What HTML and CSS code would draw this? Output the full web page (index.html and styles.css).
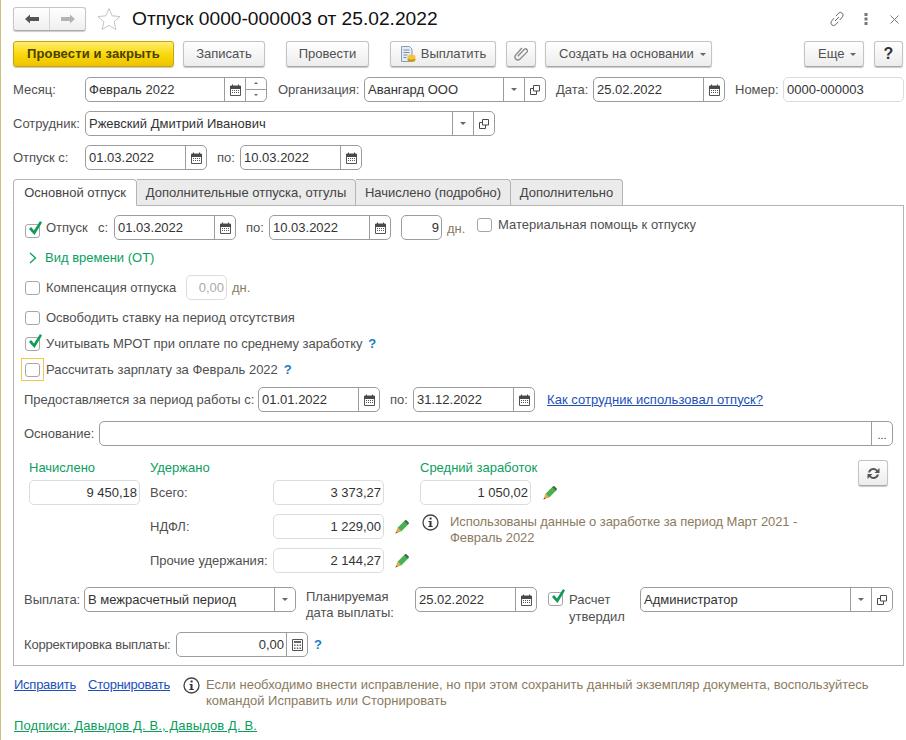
FILE: index.html
```html
<!DOCTYPE html>
<html lang="ru">
<head>
<meta charset="utf-8">
<title>Отпуск 0000-000003</title>
<link rel="stylesheet" href="styles.css">
</head>
<body>
<svg class="defs" width="0" height="0" aria-hidden="true">
  <symbol id="cal" viewBox="0 0 11 12">
    <path d="M0.5 2h10v9.5h-10z" fill="#fff" stroke="#555"/>
    <path d="M0 2h11v3H0z" fill="#4a4a4a"/>
    <path d="M2.5 0.5v2M8.5 0.5v2" stroke="#4a4a4a"/>
    <path d="M2 6h1v1H2zM4 6h1v1H4zM6 6h1v1H6zM8 6h1v1H8zM2 8h1v1H2zM4 8h1v1H4zM6 8h1v1H6zM8 8h1v1H8z" fill="#555"/>
  </symbol>
  <symbol id="open" viewBox="0 0 10 10">
    <path d="M3.5 0.5h6v5.500h-6z" fill="none" stroke="#4a4a4a"/>
    <path d="M3.500 3.500h-3v6h6v-3.500" fill="none" stroke="#4a4a4a"/>
  </symbol>
  <symbol id="pencil" viewBox="0 0 14 14">
    <path d="M2.500 7.800L9.500 .8l3.700 3.700-7 7z" fill="#4bb04f"/>
    <path d="M9.200 1.100L10.200 .3a1 1 0 0 1 1.300 0l2.200 2.200a1 1 0 0 1 0 1.300l-.8 1z" fill="#3d6a48"/>
    <path d="M2.500 7.800l3.700 3.700L.5 13.500z" fill="#e8a64a"/>
    <path d="M1.200 11.500L.5 13.500l2-.7z" fill="#555"/>
  </symbol>
  <symbol id="info" viewBox="0 0 17 17">
    <circle cx="8.500" cy="8.500" r="7.500" fill="#fff" stroke="#444" stroke-width="1.300"/>
    <path d="M7.600 3.600h2v2h-2zM6.500 7h3v5h1.200v1H6.300v-1h1.200V8h-1z" fill="#333"/>
  </symbol>
  <symbol id="check" viewBox="0 0 15 17">
    <path d="M2 9l2-2 3 3.500L13 1l2 1.500L7.500 15z" fill="#0c9c55"/>
  </symbol>
</svg>

<div class="page">
  <header class="title-row">
    <div class="nav">
      <span class="nav-btn"><svg width="14" height="10" viewBox="0 0 14 10"><path d="M0 5l5-4.500V3h9v4H5v2.500z" fill="#555"/></svg></span>
      <span class="nav-btn"><svg width="14" height="10" viewBox="0 0 14 10"><path d="M14 5L9 .5V3H0v4h9v2.500z" fill="#b4b4b4"/></svg></span>
    </div>
    <svg class="star" width="24" height="24" viewBox="0 0 24 24"><path d="M12 1.500l3.200 7.300 7.800.8-5.900 5.200 1.800 7.700-6.900-4-6.900 4 1.800-7.700L1 9.600l7.800-.8z" fill="#fff" stroke="#c4c4c4"/></svg>
    <h1 class="title">Отпуск 0000-000003 от 25.02.2022</h1>
    <div class="win-icons">
      <svg width="16" height="16" viewBox="0 0 16 16"><g fill="none" stroke="#6a6a6a" stroke-width="1"><path d="M6.800 5.200l2.700-3a2.700 2.700 0 0 1 4 3.600L10.800 9"/><path d="M9.200 10.800l-2.700 3a2.700 2.700 0 0 1-4-3.600L5.200 7"/><path d="M6 10l4-4"/></g></svg>
      <svg width="4" height="12" viewBox="0 0 4 12"><path d="M.500 0h3v3h-3zM.500 4.500h3v3h-3zM.500 9h3v3h-3z" fill="#777"/></svg>
      <svg width="9" height="9" viewBox="0 0 9 9"><path d="M.500 .500l8 8M8.500 .500l-8 8" stroke="#777" stroke-width="1"/></svg>
    </div>
  </header>

  <div class="toolbar">
    <button class="btn btn-main w-161">Провести и закрыть</button>
    <button class="btn w-82 ml-9">Записать</button>
    <button class="btn w-83 ml-21">Провести</button>
    <button class="btn w-106 ml-21"><svg class="pay-ic" width="16" height="17" viewBox="0 0 16 17"><path d="M1.500 .500h8l2.500 2.500v12.500h-10.500z" fill="#e6ecf5" stroke="#8a9bb5"/><path d="M3.500 4h6M3.500 6.500h6M3.500 9h4M3.500 11.500h3" stroke="#7d8ea8"/><ellipse cx="11.500" cy="13.500" rx="4" ry="2.500" fill="#c99a1c"/><ellipse cx="11.500" cy="11" rx="4" ry="2.500" fill="#f2c53a"/></svg>Выплатить</button>
    <button class="btn w-30 ml-10"><svg width="14" height="16" viewBox="0 0 14 16"><path d="M4 10.500l6-7.500a2 2 0 0 1 3 2.500L6 13.500a3 3 0 0 1-4.500-3.800L7.500 2" fill="none" stroke="#8c8c8c" stroke-width="1.400" transform="rotate(4 7 8)"/></svg></button>
    <button class="btn btn-drop w-167 ml-9">Создать на основании<i class="caret ml-6"></i></button>
    <button class="btn btn-drop w-60 ml-auto">Еще<i class="caret ml-6"></i></button>
    <button class="btn w-29 ml-10 help-btn">?</button>
  </div>

  <div class="head-form">
    <div class="row">
      <label class="lbl w-72">Месяц:</label>
      <div class="field w-182"><span class="val">Февраль 2022</span>
        <span class="fb"><svg width="11" height="12"><use href="#cal"/></svg></span>
        <span class="fb spin"><i class="up"></i><i class="down"></i></span>
      </div>
      <label class="lbl tight w-86 ml-11">Организация:</label>
      <div class="field w-182"><span class="val">Авангард ООО</span>
        <span class="fb"><i class="caret"></i></span>
        <span class="fb"><svg width="10" height="10"><use href="#open"/></svg></span>
      </div>
      <label class="lbl w-37 ml-10">Дата:</label>
      <div class="field w-132"><span class="val">25.02.2022</span>
        <span class="fb"><svg width="11" height="12"><use href="#cal"/></svg></span>
      </div>
      <label class="lbl w-48 ml-10">Номер:</label>
      <div class="field ro w-121"><span class="val">0000-000003</span></div>
    </div>
    <div class="row">
      <label class="lbl w-72">Сотрудник:</label>
      <div class="field w-410"><span class="val">Ржевский Дмитрий Иванович</span>
        <span class="fb"><i class="caret"></i></span>
        <span class="fb"><svg width="10" height="10"><use href="#open"/></svg></span>
      </div>
    </div>
    <div class="row">
      <label class="lbl w-72">Отпуск с:</label>
      <div class="field w-122"><span class="val">01.03.2022</span>
        <span class="fb"><svg width="11" height="12"><use href="#cal"/></svg></span>
      </div>
      <label class="lbl w-23 ml-10">по:</label>
      <div class="field w-122"><span class="val">10.03.2022</span>
        <span class="fb"><svg width="11" height="12"><use href="#cal"/></svg></span>
      </div>
    </div>
  </div>

  <nav class="tabs">
    <span class="tab active w-124">Основной отпуск</span>
    <span class="tab w-219">Дополнительные отпуска, отгулы</span>
    <span class="tab w-155">Начислено (подробно)</span>
    <span class="tab w-112">Дополнительно</span>
  </nav>

  <section class="panel">
    <div class="row row-top">
      <span class="cb cb-low"><svg class="tick" width="15" height="17"><use href="#check"/></svg></span>
      <label class="lbl ml-6 w-52">Отпуск</label>
      <label class="lbl w-16">с:</label>
      <div class="field w-122"><span class="val">01.03.2022</span>
        <span class="fb"><svg width="11" height="12"><use href="#cal"/></svg></span>
      </div>
      <label class="lbl w-23 ml-10">по:</label>
      <div class="field w-122"><span class="val">10.03.2022</span>
        <span class="fb"><svg width="11" height="12"><use href="#cal"/></svg></span>
      </div>
      <div class="field ml-10 w-41 ro-dark"><span class="val num">9</span></div>
      <label class="lbl hint ml-5 w-30 dn-low">дн.</label>
      <span class="cb cb-high"></span>
      <label class="lbl ml-6 lbl-high">Материальная помощь к отпуску</label>
    </div>

    <div class="line mt-8">
      <svg class="chev" width="8" height="12" viewBox="0 0 8 12"><path d="M1 1l5.500 5L1 11" fill="none" stroke="#0a9e5c" stroke-width="1.300"/></svg>
      <span class="green">Вид времени (ОТ)</span>
    </div>

    <div class="row mt-7">
      <span class="cb"></span>
      <label class="lbl ml-6 w-140">Компенсация отпуска</label>
      <div class="field ro w-41"><span class="val num faint">0,00</span></div>
      <label class="lbl hint ml-5">дн.</label>
    </div>

    <div class="line mt-8">
      <span class="cb"></span>
      <label class="lbl ml-6">Освободить ставку на период отсутствия</label>
    </div>

    <div class="line mt-6">
      <span class="cb"><svg class="tick" width="15" height="17"><use href="#check"/></svg></span>
      <label class="lbl tight ml-6">Учитывать МРОТ при оплате по среднему заработку</label>
      <span class="q ml-6">?</span>
    </div>

    <div class="line focus-line">
      <span class="focus"><span class="cb"></span></span>
      <label class="lbl ml-2">Рассчитать зарплату за Февраль 2022</label>
      <span class="q ml-6">?</span>
    </div>

    <div class="row mt-6">
      <label class="lbl w-234">Предоставляется за период работы с:</label>
      <div class="field w-122"><span class="val">01.01.2022</span>
        <span class="fb"><svg width="11" height="12"><use href="#cal"/></svg></span>
      </div>
      <label class="lbl w-23 ml-10">по:</label>
      <div class="field w-122"><span class="val">31.12.2022</span>
        <span class="fb"><svg width="11" height="12"><use href="#cal"/></svg></span>
      </div>
      <a class="link wide ml-12" href="#">Как сотрудник использовал отпуск?</a>
    </div>

    <div class="row mt-9">
      <label class="lbl w-75">Основание:</label>
      <div class="field w-794"><span class="val"></span>
        <span class="fb dots">...</span>
      </div>
    </div>

    <div class="totals">
      <div class="col col-a">
        <div class="col-head green">Начислено</div>
        <div class="field ro w-111"><span class="val num">9 450,18</span></div>
      </div>
      <div class="col col-b">
        <div class="col-head green">Удержано</div>
        <div class="row">
          <label class="lbl w-123">Всего:</label>
          <div class="field ro w-111"><span class="val num">3 373,27</span></div>
        </div>
        <div class="row mt-9">
          <label class="lbl w-123">НДФЛ:</label>
          <div class="field ro w-111"><span class="val num">1 229,00</span></div>
          <svg class="pen" width="14" height="14"><use href="#pencil"/></svg>
        </div>
        <div class="row mt-9">
          <label class="lbl w-123">Прочие удержания:</label>
          <div class="field ro w-111"><span class="val num">2 144,27</span></div>
          <svg class="pen" width="14" height="14"><use href="#pencil"/></svg>
        </div>
      </div>
      <div class="col col-c">
        <div class="col-head green">Средний заработок</div>
        <div class="row">
          <div class="field ro w-111"><span class="val num">1 050,02</span></div>
          <svg class="pen" width="14" height="14"><use href="#pencil"/></svg>
        </div>
        <div class="info-note">
          <svg class="info-ic" width="17" height="17"><use href="#info"/></svg>
          <p class="note">Использованы данные о заработке за период Март 2021 -<br>Февраль 2022</p>
        </div>
      </div>
      <button class="btn refresh"><svg width="15" height="13" viewBox="0 0 15 13"><path d="M2 5.500A5.500 5.500 0 0 1 11.500 3L13.500 1v5h-5l1.800-1.800A3.800 3.800 0 0 0 4 5.500zM13 7.500A5.500 5.500 0 0 1 3.500 10L1.500 12V7h5L4.700 8.800A3.800 3.800 0 0 0 11 7.500z" fill="#555"/></svg></button>
    </div>

    <div class="pay-row">
      <label class="lbl w-60 lbl-mid">Выплата:</label>
      <div class="field w-212"><span class="val">В межрасчетный период</span>
        <span class="fb"><i class="caret"></i></span>
      </div>
      <label class="lbl two-line ml-10 w-109">Планируемая<br>дата выплаты:</label>
      <div class="field w-122"><span class="val">25.02.2022</span>
        <span class="fb"><svg width="11" height="12"><use href="#cal"/></svg></span>
      </div>
      <span class="cb cb-pay"><svg class="tick" width="15" height="17"><use href="#check"/></svg></span>
      <label class="lbl two-line tl-low ml-6 w-71">Расчет<br>утвердил</label>
      <div class="field w-253"><span class="val">Администратор</span>
        <span class="fb"><i class="caret"></i></span>
        <span class="fb"><svg width="10" height="10"><use href="#open"/></svg></span>
      </div>
    </div>

    <div class="row">
      <label class="lbl narrow w-152">Корректировка выплаты:</label>
      <div class="field w-132"><span class="val num">0,00</span>
        <span class="fb"><svg width="11" height="12" viewBox="0 0 11 12"><path d="M.500 .500h10v11H.500z" fill="#fff" stroke="#555"/><path d="M2 2h7v2H2z" fill="#666"/><path d="M2 5.500h1.500V7H2zM4.800 5.500h1.500V7H4.800zM7.500 5.500H9V7H7.500zM2 8.500h1.500V10H2zM4.800 8.500h1.500V10H4.800zM7.500 8.500H9V10H7.500z" fill="#666"/></svg></span>
      </div>
      <span class="q ml-6">?</span>
    </div>
  </section>

  <div class="foot">
    <a class="link foot-link" href="#">Исправить</a>
    <a class="link foot-link ml-12" href="#">Сторнировать</a>
    <svg class="foot-ic" width="17" height="17"><use href="#info"/></svg>
    <p class="note">Если необходимо внести исправление, но при этом сохранить данный экземпляр документа, воспользуйтесь<br>командой Исправить или Сторнировать</p>
  </div>
  <a class="link green-link" href="#">Подписи: Давыдов Д. В., Давыдов Д. В.</a>
</div>
</body>
</html>
```

FILE: styles.css
```css
* { box-sizing: border-box; }
html, body { margin: 0; padding: 0; background: #fff; }
body { font: 13px/16px "Liberation Sans", Arial, sans-serif; color: #505050; overflow: hidden; }
.defs { position: absolute; }
.page { width: 906px; height: 740px; padding: 7px 2px 0 12px; border-left: 1px solid #cfc07a; }

/* title */
.title-row { display: flex; align-items: center; height: 24px; }
.nav { display: flex; width: 73px; height: 24px; border: 1px solid #c6c6c6; border-bottom-color: #aaa; border-radius: 3px; background: linear-gradient(#fff, #efefef); box-shadow: 0 1px 1px #ccc; }
.nav-btn { flex: 1; display: flex; align-items: center; justify-content: center; }
.nav-btn + .nav-btn { border-left: 1px solid #d4d4d4; }
.star { margin-left: 11px; }
.title { margin: 0 0 0 11px; font-size: 19.2px; line-height: 24px; font-weight: 400; color: #111; }
.win-icons { margin-left: auto; display: flex; align-items: center; padding-right: 5px; }
.win-icons svg:nth-child(2) { margin-left: 19px; }
.win-icons svg:nth-child(3) { margin-left: 22px; }

/* toolbar */
.toolbar { display: flex; height: 26px; margin-top: 10px; padding-right: 1px; }
.btn { display: inline-flex; align-items: center; justify-content: center; height: 26px; padding: 0; border: 1px solid #c4c4c4; border-bottom-color: #a8a8a8; border-radius: 3px; background: linear-gradient(#fff, #ececec); box-shadow: 0 1px 1px #c8c8c8; font: inherit; color: #505050; }
.btn-main { background: linear-gradient(#ffee6e, #f9d90c 50%, #eec400); border-color: #c7a60a; color: #4a4000; font-weight: 700; letter-spacing: .15px; }
.btn-drop { justify-content: flex-start; padding-left: 13px; }
.pay-ic { margin-right: 5px; }
.help-btn { font-size: 16px; font-weight: 700; color: #333; }
.caret { display: inline-block; width: 0; height: 0; border: 3.5px solid transparent; border-top: 3.5px solid #666; border-bottom: 0; }

/* form rows */
.head-form { display: flex; flex-direction: column; gap: 9px; margin-top: 10px; }
.row { display: flex; align-items: center; height: 25px; flex: none; }
.lbl { display: block; flex: none; white-space: nowrap; }
.tight { letter-spacing: -.06px; }
.narrow { letter-spacing: -.18px; }
.field { display: flex; flex: none; height: 25px; border: 1px solid #9c9c9c; border-radius: 5px; background: #fff; color: #333; }
.field.ro { border-color: #dcdcdc; }
.val { flex: 1; min-width: 0; padding-left: 3px; line-height: 23px; white-space: nowrap; }
.num { padding: 0 2px 0 0; text-align: right; }
.faint { color: #aaa; }
.fb { flex: none; width: 21px; display: flex; align-items: center; justify-content: center; border-left: 1px solid #9c9c9c; }
.spin { flex-direction: column; }
.spin i { flex: 1; width: 100%; position: relative; }
.spin i + i { border-top: 1px solid #9c9c9c; }
.spin i::after { content: ""; position: absolute; left: 8px; top: 4px; border: 2.500px solid transparent; }
.up::after { border-bottom-color: #666 !important; border-top-width: 0 !important; }
.down::after { border-top-color: #666 !important; border-bottom-width: 0 !important; }
.dots { align-items: flex-end; padding-bottom: 5px; font-size: 11px; line-height: 10px; }

/* tabs */
.tabs { display: flex; height: 27px; margin-top: 9px; position: relative; z-index: 1; margin-bottom: -1px; }
.tab { flex: none; height: 27px; padding-top: 5px; text-align: center; border: 1px solid #b4b4b4; border-left-width: 0; border-radius: 0 4px 0 0; background: #ebebeb; color: #444; }
.tab.active { border-left-width: 1px; border-bottom-color: #fff; border-radius: 4px 4px 0 0; background: #fff; }

/* panel */
.panel { width: 891px; height: 461px; padding: 9px 10px 0 10px; border: 1px solid #b4b4b4; }
.row-top { align-items: center; }
.line { display: flex; align-items: center; height: 20px; }
.focus-line { height: 23px; margin-top: 4px; margin-left: -3px; }
.cb { display: block; flex: none; position: relative; width: 15px; height: 14px; margin-left: 1px; border: 1px solid #a6a6a6; border-radius: 3px; background: #fff; }
.tick { position: absolute; left: 1px; top: -5px; overflow: visible; }
.cb-low { transform: translateY(3px); }
.cb-high { margin-left: 0; transform: translateY(-3px); }
.lbl-high { transform: translateY(-3px); }
.dn-low { transform: translateY(1px); }
.hint { color: #8b7b5e; }
.green { color: #0a9e5c; }
.chev { margin: 0 8px 0 5px; }
.q { color: #1a7cc0; font-weight: 700; font-size: 13px; }
.focus { display: flex; align-items: center; justify-content: center; width: 23px; height: 23px; border: 1px solid #f0c850; }
.focus .cb { margin: 0; }
.link { color: #1c50b8; text-decoration: underline; white-space: nowrap; }
.wide { letter-spacing: .06px; }

/* totals */
.totals { display: flex; margin: 14px 0 0 5px; height: 113px; position: relative; }
.col { flex: none; }
.col-a { width: 121px; }
.col-b { width: 270px; }
.col-head { height: 20px; line-height: 16px; }
.pen { flex: none; margin-left: 11px; }
.col-c .pen { margin-left: 12px; }
.info-note { display: flex; margin-top: 9px; }
.info-ic { flex: none; margin: 0 11px 0 2px; }
.note { margin: 0; color: #8b7b5e; white-space: nowrap; }
.info-note .note { letter-spacing: -.08px; }
.refresh { position: absolute; top: 0; right: 5px; width: 30px; }

/* payment */
.pay-row { display: flex; height: 45px; margin-top: 14px; }
.lbl-mid { line-height: 25px; }
.two-line { padding-top: 2px; }
.tl-low { padding-top: 4px; line-height: 17px; }
.cb-pay { margin: 5px 0 0 11px; }

/* footer */
.foot { display: flex; align-items: flex-start; margin-top: 11px; padding-left: 1px; }
.foot-link { letter-spacing: -.25px; }
.foot-ic { flex: none; margin: 0 6px 0 13px; }
.green-link { display: block; width: max-content; margin: 9px 0 0 1px; color: #0a9e5c; letter-spacing: .13px; }

/* spacing */
.mt-6 { margin-top: 6px; } .mt-7 { margin-top: 7px; } .mt-8 { margin-top: 8px; } .mt-9 { margin-top: 9px; }
.ml-2 { margin-left: 2px; } .ml-5 { margin-left: 5px; } .ml-6 { margin-left: 6px; } .ml-7 { margin-left: 7px; } .ml-8 { margin-left: 8px; } .ml-9 { margin-left: 9px; } .ml-10 { margin-left: 10px; } .ml-11 { margin-left: 11px; } .ml-12 { margin-left: 12px; } .ml-21 { margin-left: 21px; } .ml-auto { margin-left: auto; }

/* widths */
.w-16 { width: 16px; } .w-23 { width: 23px; } .w-29 { width: 29px; } .w-30 { width: 30px; } .w-37 { width: 37px; } .w-41 { width: 41px; } .w-48 { width: 48px; } .w-52 { width: 52px; } .w-60 { width: 60px; } .w-71 { width: 71px; } .w-72 { width: 72px; } .w-75 { width: 75px; } .w-82 { width: 82px; } .w-83 { width: 83px; } .w-86 { width: 86px; } .w-106 { width: 106px; } .w-109 { width: 109px; } .w-111 { width: 111px; } .w-112 { width: 112px; } .w-121 { width: 121px; } .w-122 { width: 122px; } .w-123 { width: 123px; } .w-124 { width: 124px; } .w-132 { width: 132px; } .w-140 { width: 140px; } .w-152 { width: 152px; } .w-155 { width: 155px; } .w-161 { width: 161px; } .w-167 { width: 167px; } .w-182 { width: 182px; } .w-212 { width: 212px; } .w-219 { width: 219px; } .w-234 { width: 234px; } .w-253 { width: 253px; } .w-410 { width: 410px; } .w-794 { width: 794px; }
```
